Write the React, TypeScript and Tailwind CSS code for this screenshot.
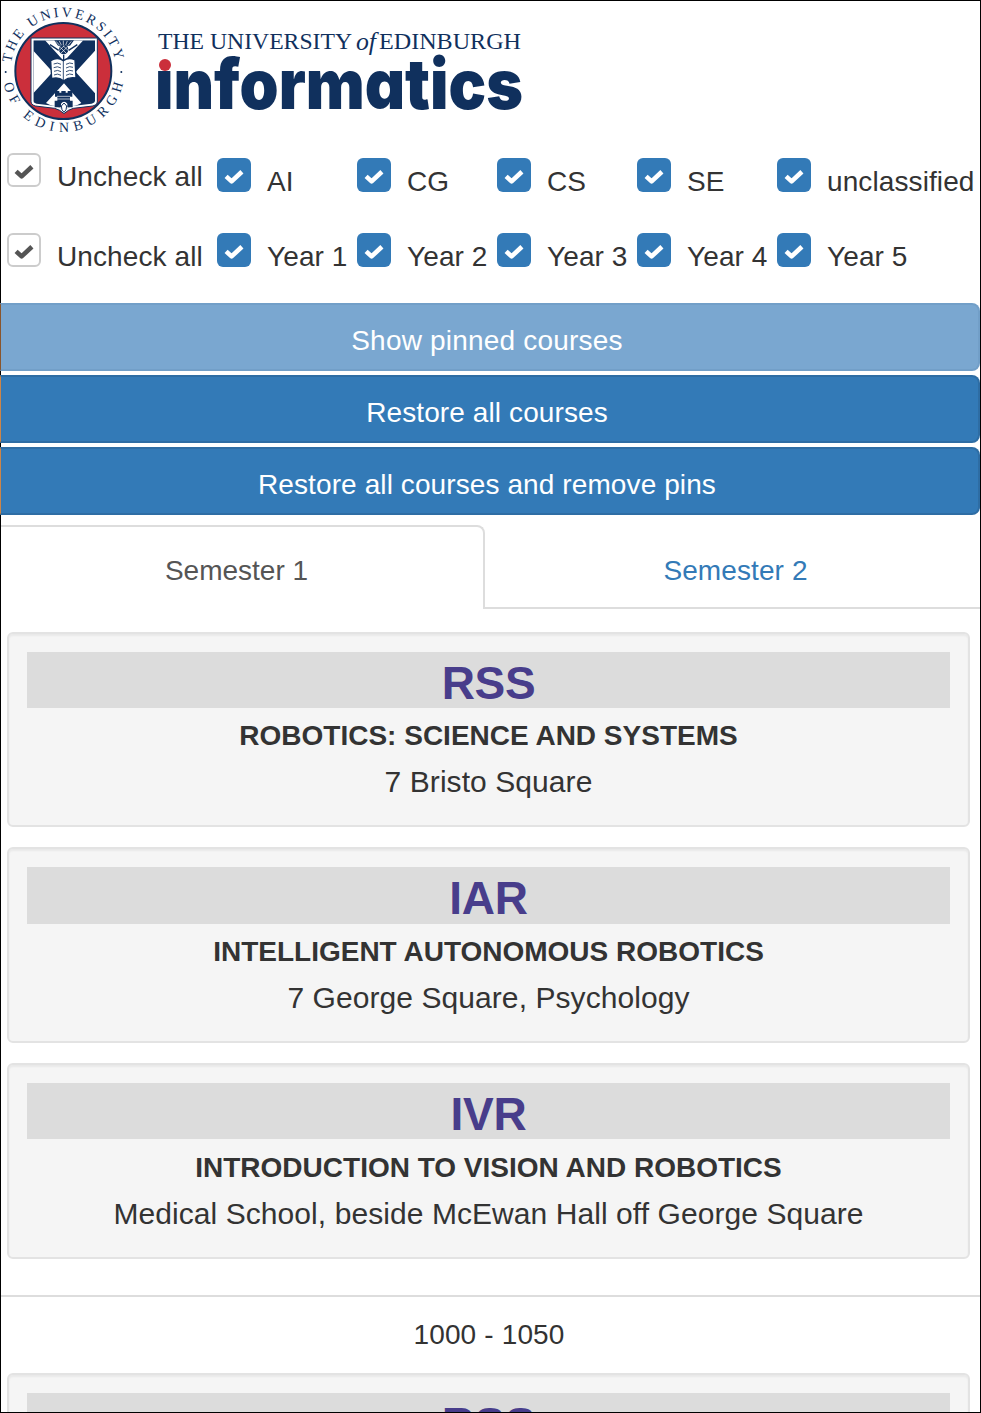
const NAVY = '#10305d';
const RED = '#cb2f3b';

function Seal() {
  return (
    <svg viewBox="0 0 420 420" className="h-[140px] w-[140px] shrink-0" aria-hidden="true">
      <defs>
        <path id="sealTop" d="M33.6 231 A158 158 0 1 1 346.4 231" />
        <path id="sealBottom" d="M7 213 A183 183 0 0 0 373 213" />
        <clipPath id="shield">
          <path d="M100 121H285V303Q283 311 268 312L218 318Q203 321 192 332Q181 321 166 318L116 312Q101 311 100 303Z" />
        </clipPath>
      </defs>
      <circle cx="190" cy="213" r="144" fill={RED} stroke={NAVY} strokeWidth="6" />
      <path d="M93 114H292V306Q290 318 270 319L220 325Q204 329 192 341Q180 329 164 325L114 319Q95 318 93 306Z" fill="#fff" stroke={NAVY} strokeWidth="3" />
      <g clipPath="url(#shield)">
        <rect x="95" y="115" width="195" height="230" fill={NAVY} />
        <path d="M100 152L158 216L100 280Z M285 152L227 216L285 280Z M135 121H250L192 184Z M192 250L244 309L192 335L138 309Z" fill="#fff" />
      </g>
      <path d="M163 121H222L210 137H174Z" fill={NAVY} />
      <path d="M168 124L178 135M178 123L184 135M190 122V136M202 123L197 135M214 124L205 135" stroke="#fff" strokeWidth="2" />
      <circle cx="191" cy="149" r="14" fill={NAVY} />
      <path d="M181 142L199 160M189 137L204 151M201 142L183 159M193 137L178 151" stroke="#fff" strokeWidth="2" />
      <path d="M191 164V180M150 134L176 151M232 134L206 151" stroke={NAVY} strokeWidth="4" />
      <path d="M152 182Q172 170 190 182Q207 170 225 180L228 234Q207 230 191 242Q175 230 155 236Z" fill="#fff" stroke={NAVY} strokeWidth="4" />
      <path d="M190 182V241M161 192Q173 186 183 193M161 203Q173 197 183 204M162 214Q173 208 183 215M162 225Q173 219 183 226M198 193Q209 186 219 191M198 204Q209 197 219 202M198 215Q209 208 219 213M198 226Q209 219 219 224" fill="none" stroke={NAVY} strokeWidth="2.5" />
      <path d="M165 273H178V278H184V273H197V278H203V273H217V290H210V302H218V322H202V311Q192 299 183 311V322H164V302H172V290H165Z" fill={NAVY} />
      <path d="M171 289H211M171 297H211" stroke="#fff" strokeWidth="2" />
      <path d="M184 318Q184 331 192 337Q200 331 200 318L192 309Z" fill="#fff" stroke={NAVY} strokeWidth="3" />
      <circle cx="17" cy="216" r="3" fill={NAVY} />
      <circle cx="364" cy="216" r="3" fill={NAVY} />
      <g fill={NAVY} fontFamily="'Liberation Serif', serif" fontSize="42">
        <text>
          <textPath href="#sealTop" startOffset="43" textLength="447">THE UNIVERSITY</textPath>
        </text>
        <text>
          <textPath href="#sealBottom" startOffset="38" textLength="499">OF EDINBURGH</textPath>
        </text>
      </g>
    </svg>
  );
}

function Wordmark() {
  return (
    <svg viewBox="140 0 400 140" className="h-[140px] w-[400px] shrink-0">
      <g fill={NAVY} fontFamily="'Liberation Serif', serif">
        <text x="158" y="49" fontSize="23.5" textLength="194" lengthAdjust="spacingAndGlyphs">THE UNIVERSITY</text>
        <text x="356" y="50" fontSize="25" fontStyle="italic" textLength="20" lengthAdjust="spacingAndGlyphs">of</text>
        <text x="379" y="49" fontSize="23.5" textLength="142" lengthAdjust="spacingAndGlyphs">EDINBURGH</text>
      </g>
      <text
        x="155"
        y="109"
        fill={NAVY}
        fontFamily="Inter, sans-serif"
        fontSize="69"
        fontWeight="900"
        textLength="368"
        lengthAdjust="spacingAndGlyphs"
        className="[font-feature-settings:'cv11']"
      >
        informatics
      </text>
      <rect x="154" y="52" width="21" height="18.5" fill="#fff" />
      <circle cx="165" cy="65" r="6" fill={RED} />
    </svg>
  );
}

function Check({ muted = false }: { muted?: boolean }) {
  return (
    <span
      className={
        muted
          ? 'flex h-[34px] w-[34px] shrink-0 items-center justify-center rounded-md border-2 border-[#ccc] bg-white pt-[3px] text-[#555]'
          : 'flex h-[34px] w-[34px] shrink-0 items-center justify-center rounded-md bg-[#337ab7] pt-[3px] text-white'
      }
    >
      <svg viewBox="0 0 20 16" className="h-4 w-5">
        <path d="M2.1 7.4L7.6 12.4L17.9 2.8" fill="none" stroke="currentColor" strokeWidth="4.6" strokeLinejoin="round" />
      </svg>
    </span>
  );
}

function Filters({ labels, low = false }: { labels: string[]; low?: boolean }) {
  return (
    <div className="flex h-20 pl-1.5 tracking-[0.1px]">
      <div className="flex w-[210px] shrink-0 gap-4">
        <Check muted />
        <span className="pt-1 whitespace-nowrap">Uncheck all</span>
      </div>
      {labels.map((label) => (
        <div key={label} className={low ? 'flex w-[140px] shrink-0 gap-4 pt-[5px]' : 'flex w-[140px] shrink-0 gap-4'}>
          <Check />
          <span className="pt-1 whitespace-nowrap">{label}</span>
        </div>
      ))}
    </div>
  );
}

function Action({ label, faded = false }: { label: string; faded?: boolean }) {
  return (
    <button
      className={
        faded
          ? '-ml-px h-[68px] rounded-r-lg border-2 border-l border-[#729fc8] border-l-[#8a552b] bg-[#7aa7d0] pt-2 pr-[5px] tracking-[0.2px] text-white'
          : '-ml-px h-[68px] rounded-r-lg border-2 border-l border-[#2e6da4] border-l-[#cc8548] bg-[#337ab7] pt-2 pr-[5px] tracking-[0.1px] text-white'
      }
    >
      {label}
    </button>
  );
}

function Course({ code, title, place, variant = 'first' }: { code: string; title: string; place: string; variant?: 'first' | 'tallBar' | 'tallGap' }) {
  return (
    <div
      className={
        variant === 'first'
          ? 'mr-[10px] ml-1.5 h-[195px] shrink-0 rounded-md border-2 border-[#e3e3e3] bg-[#f5f5f5] p-[18px] text-center shadow-[inset_0_2px_2px_rgba(0,0,0,0.05)]'
          : 'mr-[10px] ml-1.5 h-[196px] shrink-0 rounded-md border-2 border-[#e3e3e3] bg-[#f5f5f5] p-[18px] text-center shadow-[inset_0_2px_2px_rgba(0,0,0,0.05)]'
      }
    >
      <h2
        className={
          variant === 'tallBar'
            ? 'h-[57px] bg-[#dcdcdc] pt-1 text-[46px] leading-[54px] font-bold tracking-[-0.3px] text-[#483d8b]'
            : 'h-14 bg-[#dcdcdc] pt-1 text-[46px] leading-[54px] font-bold tracking-[-0.3px] text-[#483d8b]'
        }
      >
        {code}
      </h2>
      <h3
        className={
          variant === 'tallGap'
            ? 'pt-[9px] text-[28px] leading-10 font-bold whitespace-nowrap'
            : 'pt-2 text-[28px] leading-10 font-bold whitespace-nowrap'
        }
      >
        {title}
      </h3>
      <p className="pt-[6px] text-[30px] leading-10 tracking-[0.07px] whitespace-nowrap">{place}</p>
    </div>
  );
}

export default function App() {
  return (
    <div className="flex h-[1413px] w-[981px] flex-col border border-black bg-white font-['Liberation_Sans',Arial,sans-serif] text-[28px] leading-10 text-[#333]">
      <header className="-mt-px flex h-[153px] shrink-0">
        <div className="-ml-px flex">
          <Seal />
          <Wordmark />
        </div>
      </header>
      <Filters labels={['AI', 'CG', 'CS', 'SE', 'unclassified']} low />
      <Filters labels={['Year 1', 'Year 2', 'Year 3', 'Year 4', 'Year 5']} />
      <div className="mt-[-10px] flex flex-col gap-1">
        <Action label="Show pinned courses" faded />
        <Action label="Restore all courses" />
        <Action label="Restore all courses and remove pins" />
      </div>
      <nav className="mt-[10px] flex h-[84px] shrink-0 text-center">
        <div className="w-[484px] rounded-tr-lg border-t-2 border-r-2 border-[#ddd] pt-[24px] pr-[11px] text-[#555]">Semester 1</div>
        <div className="flex-1 border-b-2 border-[#ddd] pt-[26px] pl-[6px] tracking-[0.1px] text-[#337ab7]">Semester 2</div>
      </nav>
      <main className="flex min-h-0 flex-1 flex-col overflow-hidden pt-[23px]">
        <div className="flex shrink-0 flex-col gap-5">
          <Course code="RSS" title="ROBOTICS: SCIENCE AND SYSTEMS" place="7 Bristo Square" />
          <Course code="IAR" title="INTELLIGENT AUTONOMOUS ROBOTICS" place="7 George Square, Psychology" variant="tallBar" />
          <Course code="IVR" title="INTRODUCTION TO VISION AND ROBOTICS" place="Medical School, beside McEwan Hall off George Square" variant="tallGap" />
        </div>
        <div className="mt-9 h-[78px] shrink-0 border-t-2 border-[#ddd] pt-[18px] pr-[3px] text-center tracking-[0.15px]">1000 - 1050</div>
        <Course code="RSS" title="ROBOTICS: SCIENCE AND SYSTEMS" place="7 Bristo Square" />
      </main>
    </div>
  );
}
